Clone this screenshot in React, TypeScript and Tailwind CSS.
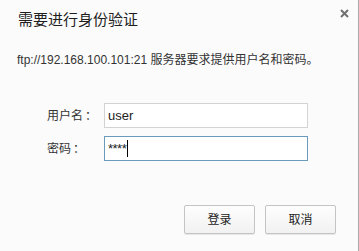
import React from "react";

const font = { fontFamily: '"Liberation Sans", "Noto Sans CJK SC", sans-serif' };

export default function App() {
  return (
    <div
      className="relative w-[359px] h-[251px] bg-[#fbfbfb] border-r border-[#a9a9a9] text-[#222] overflow-hidden"
      style={font}
    >
      <div className="pl-[18px] pt-[10px] text-[15px] leading-[20px] text-[#1e1e1e]">需要进行身份验证</div>
      <div className="absolute left-[339px] top-[8px] w-[10px] h-[10px] flex items-center justify-center">
        <svg width="9" height="9" viewBox="0 0 9 9">
          <path d="M1 1 L8 8 M8 1 L1 8" stroke="#707070" strokeWidth="2" />
        </svg>
      </div>
      <div className="pl-[17px] pt-[22px] text-[12px] leading-[16px] text-[#333]">
        ftp://192.168.100.101:21 服务器要求提供用户名和密码。
      </div>
      <div className="pl-[47px] pt-[35px] flex flex-col gap-[8px]">
        <div className="flex items-center">
          <div className="w-[57px] text-[12px] text-[#333]">
            用户名<span className="ml-[2px]">：</span>
          </div>
          <div className="w-[204px] h-[25px] border border-[#d3d3d3] bg-white pl-[3px] flex items-center text-[13px] text-[#222]">
            user
          </div>
        </div>
        <div className="flex items-center">
          <div className="w-[57px] text-[12px] text-[#333]">
            密码<span className="ml-[2px]">：</span>
          </div>
          <div className="w-[204px] h-[25px] border border-[#6a9bbd] bg-white pl-[3px] flex items-center text-[13px] text-[#222]">
            <span className="tracking-[-0.5px]">****</span>
            <span className="ml-[1px] w-[1px] h-[17px] bg-black" />
          </div>
        </div>
      </div>
      <div className="flex justify-end gap-[10px] pr-[22px] pt-[44px]">
        <button className="w-[71px] h-[29px] border border-[#c4c4c4] rounded-[2px] bg-gradient-to-b from-[#fefefe] to-[#f1f1f1] shadow-[0_1px_0_rgba(0,0,0,0.08)] text-[12px] text-[#222]">
          登录
        </button>
        <button className="w-[71px] h-[29px] border border-[#c4c4c4] rounded-[2px] bg-gradient-to-b from-[#fefefe] to-[#f1f1f1] shadow-[0_1px_0_rgba(0,0,0,0.08)] text-[12px] text-[#222]">
          取消
        </button>
      </div>
    </div>
  );
}
